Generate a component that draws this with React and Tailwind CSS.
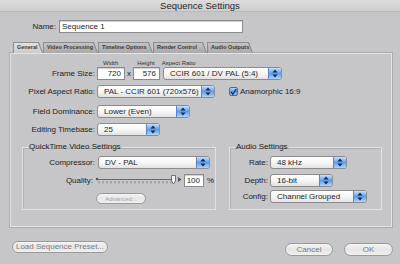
import React from "react";

const SANS = "font-['Lucida_Grande','Liberation_Sans',sans-serif]";

function Arrows() {
  return (
    <svg width="6" height="9" viewBox="0 0 6 9">
      <path d="M3 0.5 L5.6 3.6 H0.4 Z M3 8.5 L5.6 5.4 H0.4 Z" fill="#112a5c" />
    </svg>
  );
}

function Popup({ className, children }) {
  return (
    <div
      className={`flex h-[13px] items-stretch overflow-hidden rounded-[3px] border border-[#8c8c8e] bg-gradient-to-b from-white via-[#f6f6f6] to-[#e2e2e2] ${className}`}
    >
      <span className="flex flex-1 items-center whitespace-nowrap pl-[6px] leading-none">{children}</span>
      <span className="flex w-[13px] shrink-0 items-center justify-center border-l border-[#5b86c6] bg-gradient-to-b from-[#c9e0fa] via-[#5f9ce9] to-[#b1d3f8]">
        <Arrows />
      </span>
    </div>
  );
}

function Field({ className, children }) {
  return (
    <div
      className={`flex h-[13px] items-center justify-end border border-[#8a8a8c] bg-white pr-[3px] leading-none shadow-[inset_0_1px_1px_rgba(0,0,0,0.2)] ${className}`}
    >
      {children}
    </div>
  );
}

function Capsule({ className, children }) {
  return (
    <div
      className={`flex items-center justify-center whitespace-nowrap rounded-full border border-[#9a9a9c] bg-gradient-to-b from-[#f4f4f4] via-[#e6e6e6] to-[#f0f0f0] leading-none ${className}`}
    >
      {children}
    </div>
  );
}

function Tab({ className, selected, children }) {
  return (
    <div
      className={`h-[11px] bg-[#8d8d8f] pt-[1px] pl-[1px] [clip-path:polygon(0_0,calc(100%_-_4px)_0,100%_100%,0_100%)] ${className}`}
    >
      <div
        className={`flex h-full items-center overflow-hidden whitespace-nowrap pl-[3px] text-[5.5px] font-bold leading-none text-[#3a3a3a] [clip-path:polygon(0_0,calc(100%_-_5px)_0,calc(100%_-_1px)_100%,0_100%)] ${
          selected ? "bg-gradient-to-b from-[#e2e2e4] to-[#cacacc]" : "bg-gradient-to-b from-[#c2c2c4] to-[#a9a9ab]"
        }`}
      >
        {children}
      </div>
    </div>
  );
}

function Slider() {
  const ticks = [];
  for (let x = 4; x <= 76; x += 4) ticks.push(x);
  return (
    <svg width="88" height="11" viewBox="0 0 88 11">
      <circle cx="2" cy="4" r="1.2" fill="#555" />
      <line x1="3" y1="4.5" x2="80" y2="4.5" stroke="#6a6a6a" strokeWidth="1.2" />
      {ticks.map((x) => (
        <line key={x} x1={x} y1="6" x2={x} y2="8.5" stroke="#7a7a7a" strokeWidth="0.8" />
      ))}
      <path d="M76.5 0.5 H80.5 V6 L78.5 9 L76.5 6 Z" fill="#f2f2f2" stroke="#555" strokeWidth="0.8" />
      <path d="M83 2 L86.5 4.5 L83 7 Z" fill="#555" />
    </svg>
  );
}

export default function App() {
  return (
    <div className={`h-[264px] w-[400px] overflow-hidden bg-[#c6c6c8] text-[8px] text-[#1c1c1c] ${SANS}`}>
      {/* title bar */}
      <div className="flex h-[12px] items-center justify-center border-b border-[#b9b9bb] bg-gradient-to-b from-[#dcdcdc] to-[#cdcdcf] text-[9.5px] leading-none text-[#2a2a2a]">
        Sequence Settings
      </div>

      {/* name */}
      <div className="mt-[8px] flex items-center">
        <div className="w-[56px] text-right">Name:</div>
        <div className="ml-[3px] flex h-[13px] w-[184px] items-center border border-[#8a8a8c] bg-white pl-[2px] leading-none shadow-[inset_0_1px_1px_rgba(0,0,0,0.2)]">
          Sequence 1
        </div>
      </div>

      {/* tabs */}
      <div className="mt-[9px] ml-[13px] flex">
        <Tab className="w-[30px]" selected>General</Tab>
        <Tab className="w-[55px]">Video Processing</Tab>
        <Tab className="w-[55px]">Timeline Options</Tab>
        <Tab className="w-[54px]">Render Control</Tab>
        <Tab className="w-[46px]">Audio Outputs</Tab>
      </div>

      {/* panel */}
      <div className="ml-[10px] flex h-[174px] w-[382px] flex-col border border-[#e4e4e6] shadow-[0_0_0_1px_#acacae]">
        <div className="mt-[5px] flex h-[7px] items-center text-[6px] leading-none text-[#333]">
          <span className="ml-[92px]">Width</span>
          <span className="ml-[19px]">Height</span>
          <span className="ml-[7px]">Aspect Ratio</span>
        </div>

        <div className="mt-[1px] flex items-center">
          <div className="w-[84px] text-right">Frame Size:</div>
          <Field className="ml-[2px] w-[28px]">720</Field>
          <span className="w-[8px] text-center">x</span>
          <Field className="w-[27px]">576</Field>
          <Popup className="ml-[3px] w-[119px]">CCIR 601 / DV PAL (5:4)</Popup>
        </div>

        <div className="mt-[5px] flex items-center">
          <div className="w-[84px] text-right">Pixel Aspect Ratio:</div>
          <Popup className="ml-[2px] w-[118px]">PAL - CCIR 601 (720x576)</Popup>
          <div className="ml-[14px] flex h-[9px] w-[9px] items-center justify-center rounded-[2px] border border-[#3d6db3] bg-gradient-to-b from-[#bcd7f7] via-[#5d9be8] to-[#9cc5f4]">
            <svg width="8" height="8" viewBox="0 0 8 8">
              <path d="M1.2 4.2 L3.2 6.6 L7.2 0.6" fill="none" stroke="#10204a" strokeWidth="1.4" />
            </svg>
          </div>
          <span className="ml-[2px]">Anamorphic 16:9</span>
        </div>

        <div className="mt-[7px] flex items-center">
          <div className="w-[84px] text-right">Field Dominance:</div>
          <Popup className="ml-[2px] w-[93px]">Lower (Even)</Popup>
        </div>

        <div className="mt-[5px] flex items-center">
          <div className="w-[84px] text-right">Editing Timebase:</div>
          <Popup className="ml-[2px] w-[63px]">25</Popup>
        </div>

        <div className="mt-[6px] flex">
          <fieldset className="ml-[11px] h-[68px] w-[194px] border border-[#e2e2e4] shadow-[inset_1px_1px_0_#b0b0b2]">
            <legend className="ml-[5px] px-[1px] leading-[10px]">QuickTime Video Settings</legend>
            <div className="mt-[4px] flex items-center">
              <div className="w-[72px] text-right">Compressor:</div>
              <Popup className="ml-[3px] w-[112px]">DV - PAL</Popup>
            </div>
            <div className="mt-[5px] flex items-center">
              <div className="w-[70px] text-right">Quality:</div>
              <div className="ml-[2px] flex items-center">
                <Slider />
              </div>
              <Field className="ml-[1px] w-[20px]">100</Field>
              <span className="ml-[3px]">%</span>
            </div>
            <div className="mt-[6px] flex">
              <Capsule className="ml-[73px] h-[11px] w-[50px] text-[6px] text-[#a5a5a7]">Advanced...</Capsule>
            </div>
          </fieldset>

          <fieldset className="ml-[13px] h-[68px] w-[153px] border border-[#e2e2e4] shadow-[inset_1px_1px_0_#b0b0b2]">
            <legend className="ml-[5px] px-[1px] leading-[10px]">Audio Settings</legend>
            <div className="mt-[4px] flex items-center">
              <div className="w-[38px] text-right">Rate:</div>
              <Popup className="ml-[2px] w-[77px]">48 kHz</Popup>
            </div>
            <div className="mt-[5px] flex items-center">
              <div className="w-[38px] text-right">Depth:</div>
              <Popup className="ml-[2px] w-[63px]">16-bit</Popup>
            </div>
            <div className="mt-[3px] flex items-center">
              <div className="w-[38px] text-right">Config:</div>
              <Popup className="ml-[2px] w-[97px]">Channel Grouped</Popup>
            </div>
          </fieldset>
        </div>
      </div>

      {/* buttons */}
      <div className="flex items-start">
        <Capsule className="mt-[14px] ml-[12px] h-[12px] w-[96px] text-[8px] text-[#7c7c7e]">Load Sequence Preset...</Capsule>
        <Capsule className="mt-[16px] ml-[177px] h-[13px] w-[48px] text-[8px] text-[#7c7c7e]">Cancel</Capsule>
        <Capsule className="mt-[16px] ml-[11px] h-[13px] w-[49px] text-[8px] text-[#7c7c7e]">OK</Capsule>
      </div>
    </div>
  );
}
